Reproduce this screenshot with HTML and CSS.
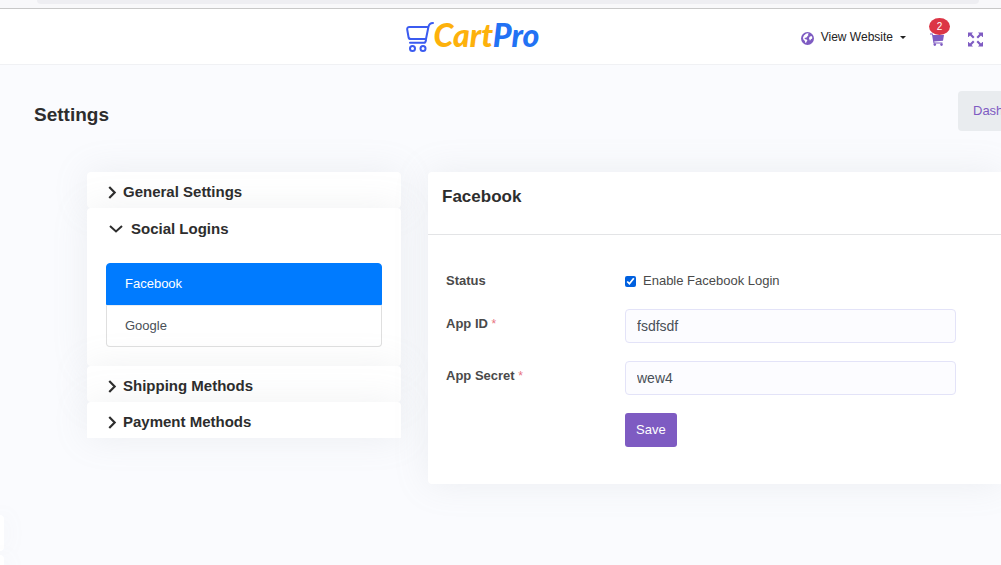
FILE: index.html
```html
<!DOCTYPE html>
<html lang="en">
<head>
<meta charset="utf-8">
<title>Settings - CartPro</title>
<link rel="stylesheet" href="styles.css">
</head>
<body>
<div class="toolbar"><div class="toolbar-field"></div></div>
<header class="header">
  <a class="logo" href="#" aria-label="CartPro">
    <svg class="logo-cart" viewBox="0 0 28 32" fill="none" stroke="#3b5bf0" stroke-width="2" stroke-linecap="round" stroke-linejoin="round">
      <path d="M27 2c-3 0-4 1-4.600 4l-2.400 12M22 6H3.500C1.800 6 1 6.800 1.200 8.500l1.300 7.500c.2 1.400.8 2 2.200 2H20M20 19c-.3 2-.8 2.800-2 2.800H4"/>
      <circle cx="6.500" cy="27.500" r="2.500"/><circle cx="17" cy="27.500" r="2.500"/>
    </svg>
    <span class="logo-text"><span class="logo-cart-word">Cart</span><span class="logo-pro-word">Pro</span></span>
  </a>
  <nav class="header-nav">
    <button class="site-menu" type="button">
      <svg class="globe" viewBox="0 0 12 12"><circle cx="6" cy="6" r="6" fill="#7e5bc2"/><path fill="#fff" d="M4.600 1.600 6 1.200l1.300.5-.9.700.5.6-1 .6-.2 1-1.100.7-1-.1-.4.700.8.7 1.200.3.700 1-.8 1.200-.5 1.100-.6-.2-.4-1.800L2.200 7 1.800 5.200l.9-2zM8 4.400l1.300-.8.8.6.4 1.300-.4.8-1 .3-.4 1.100-.6.200-.3-1.300-.5-.9z"/></svg>
      <span>View Website</span>
      <span class="caret"></span>
    </button>
    <button class="cart" type="button" aria-label="Cart">
      <svg class="cart-icon" viewBox="0 0 14 13" fill="#7e5bc2"><path d="M0 .5h2.600L3 2h11l-1 5.800-8.800.8.300 1H12.500v1H3.500L2 1.600H0z"/><circle cx="4.800" cy="11.600" r="1.300"/><circle cx="11.500" cy="11.600" r="1.300"/></svg>
      <span class="badge">2</span>
    </button>
    <button class="expand" type="button" aria-label="Full screen">
      <svg class="expand-icon" viewBox="0 0 15 15"><path fill="#7e5bc2" d="M0 .5h5L3.600 2 6.500 4.900 5 6.400 2 3.500.5 5H0zM15 .5h-5L11.400 2 8.500 4.900 10 6.400l3-2.900L14.500 5h.5zM0 14.500h5L3.600 13l2.900-2.900L5 8.600l-3 2.900L.5 10H0zM15 14.500h-5l1.400-1.500-2.900-2.900L10 8.600l3 2.900 1.500-1.500h.5z"/></svg>
    </button>
  </nav>
</header>
<main class="page">
  <div class="page-head">
    <h1 class="page-title">Settings</h1>
    <nav class="breadcrumb"><a href="#">Dashboard</a></nav>
  </div>
  <div class="columns">
    <aside class="accordion">
      <section class="group">
        <button class="group-toggle" type="button"><svg class="chevron" viewBox="0 0 10 12"><path d="M2 1l5 5-5 5"/></svg>General Settings</button>
      </section>
      <section class="group">
        <button class="group-toggle group-toggle-open" type="button"><svg class="chevron-down" viewBox="0 0 14 8"><path d="M1 1l6 5.500L13 1"/></svg>Social Logins</button>
        <div class="tabs">
          <a class="tab tab-active" href="#">Facebook</a>
          <a class="tab" href="#">Google</a>
        </div>
      </section>
      <section class="group">
        <button class="group-toggle" type="button"><svg class="chevron" viewBox="0 0 10 12"><path d="M2 1l5 5-5 5"/></svg>Shipping Methods</button>
      </section>
      <section class="group group-last">
        <button class="group-toggle" type="button"><svg class="chevron" viewBox="0 0 10 12"><path d="M2 1l5 5-5 5"/></svg>Payment Methods</button>
      </section>
    </aside>
    <section class="panel">
      <h2 class="panel-title">Facebook</h2>
      <form class="form">
        <label class="label label-check" for="status">Status</label>
        <div class="check"><input id="status" type="checkbox" checked><label for="status">Enable Facebook Login</label></div>
        <label class="label" for="app-id">App ID <span class="required">*</span></label>
        <input class="input" id="app-id" type="text" value="fsdfsdf">
        <label class="label" for="app-secret">App Secret <span class="required">*</span></label>
        <input class="input" id="app-secret" type="text" value="wew4">
        <button class="save" type="button">Save</button>
      </form>
    </section>
  </div>
</main>
<div class="dock"><div class="dock-item"></div><div class="dock-item"></div></div>
</body>
</html>
```
FILE: styles.css
```css
* { box-sizing: border-box; }
body {
  margin: 0;
  min-height: 100vh;
  overflow: hidden;
  background: #fafbfe;
  color: #2d2d2d;
  font: 13px/20px "Liberation Sans", Arial, sans-serif;
}
a { text-decoration: none; }
button { border: 0; background: none; padding: 0; color: inherit; font: inherit; cursor: pointer; }
.toolbar {
  height: 9px;
  padding: 0 22px 0 37px;
  background: #f8f8fa;
  border-bottom: 1px solid #c8c8c8;
}
.toolbar-field { height: 4px; background: #eeeef2; border-radius: 0 0 4px 4px; }
.header {
  display: grid;
  grid-template-columns: 405fr auto 461fr;
  height: 56px;
  background: #fff;
  border-bottom: 1px solid #f0f1f4;
}
.logo { grid-column: 2; display: flex; align-items: center; height: 56px; }
.logo-cart { width: 28px; height: 32px; }
.logo-text { font: italic 900 32px/32px Lato, sans-serif; margin-bottom: 4px; }
.logo-cart-word { color: #fdb10b; }
.logo-pro-word { color: #2272f4; }
.header-nav {
  display: flex;
  justify-content: flex-end;
  align-items: center;
  gap: 24px;
  padding-right: 18px;
}
.site-menu { display: flex; align-items: center; gap: 7px; font-size: 12px; color: #222; }
.globe { width: 13px; height: 13px; margin-top: 2px; }
.caret { border: 3px solid transparent; border-top-color: #222; border-bottom: 0; }
.cart { position: relative; display: flex; margin-top: 4px; }
.cart-icon { width: 14px; height: 13px; }
.badge {
  position: absolute;
  top: -15px;
  left: -1px;
  width: 21px;
  height: 17px;
  border-radius: 50%;
  background: #dc3545;
  color: #fff;
  font-size: 10px;
  line-height: 17px;
  text-align: center;
}
.expand { display: flex; margin-top: 4px; }
.expand-icon { width: 15px; height: 15px; }
.page { padding: 26px 0 0 34px; }
.page-head { display: flex; align-items: center; justify-content: space-between; height: 40px; }
.page-title { margin: 8px 0 0; font-size: 19px; line-height: 24px; }
.breadcrumb {
  width: 43px;
  padding: 10px 0 10px 15px;
  overflow: hidden;
  background: #e9ecef;
  border-radius: 4px 0 0 4px;
}
.breadcrumb a { color: #7e5bc2; }
.columns {
  display: grid;
  grid-template-columns: 314fr 573fr;
  gap: 27px;
  align-items: start;
  padding: 41px 0 0 53px;
}
.group { background: #fff; border-radius: 4px; box-shadow: 0 0 35px rgba(154, 161, 171, 0.15); }
.group-last { border-radius: 4px 4px 0 0; }
.group-toggle {
  display: flex;
  align-items: center;
  gap: 5px;
  width: 100%;
  padding: 10px 20px 6px;
  font-size: 15px;
  line-height: 20px;
  font-weight: bold;
  text-align: left;
}
.group-toggle-open { gap: 8px; padding: 11px 22px 6px; }
.chevron { width: 11px; height: 13px; }
.chevron-down { width: 14px; height: 8px; }
.chevron path, .chevron-down path { fill: none; stroke: #2d2d2d; stroke-width: 2; }
.tabs { margin: 0 19px; padding: 18px 0 19px; }
.tab { display: block; padding: 10px 18px; border: 1px solid #dfdfdf; color: #495057; }
.tab:last-child { border-top-color: #e9edf2; border-radius: 0 0 4px 4px; }
.tab-active { background: #007bff; border-color: #007bff; border-radius: 4px 4px 0 0; color: #fff; }
.panel {
  background: #fff;
  border-radius: 4px 0 0 4px;
  box-shadow: 0 0 35px rgba(154, 161, 171, 0.15);
}
.panel-title {
  margin: 0;
  padding: 14px 14px 27px;
  font-size: 17px;
  line-height: 21px;
  border-bottom: 1px solid #e3e4e6;
}
.form {
  display: grid;
  grid-template-columns: 160px 1fr;
  column-gap: 19px;
  row-gap: 18px;
  padding: 36px 45px 37px 18px;
}
.label { font-weight: bold; color: #4a4a4a; padding-top: 5px; }
.label-check { padding-top: 0; }
.required { color: #e8737f; font-size: 12px; font-weight: normal; }
.check { display: flex; align-items: center; gap: 7px; height: 20px; color: #4a4a4a; }
.check input { width: 11px; height: 11px; margin: 0; accent-color: #0060df; }
.input {
  width: 100%;
  height: 34px;
  padding: 0 11px;
  border: 1px solid #e3e3f8;
  border-radius: 4px;
  background: #fcfcff;
  color: #495057;
  font: 14px "Liberation Sans", Arial, sans-serif;
}
.save {
  grid-column: 2;
  justify-self: start;
  padding: 7px 11px;
  border-radius: 3px;
  background: #7e5bc2;
  color: #fff;
}
.dock { position: fixed; left: 0; top: 515px; width: 4px; }
.dock-item {
  height: 36px;
  margin-bottom: 4px;
  background: #fff;
  border-radius: 0 4px 4px 0;
  box-shadow: 0 0 20px rgba(154, 161, 171, 0.15);
}
```
